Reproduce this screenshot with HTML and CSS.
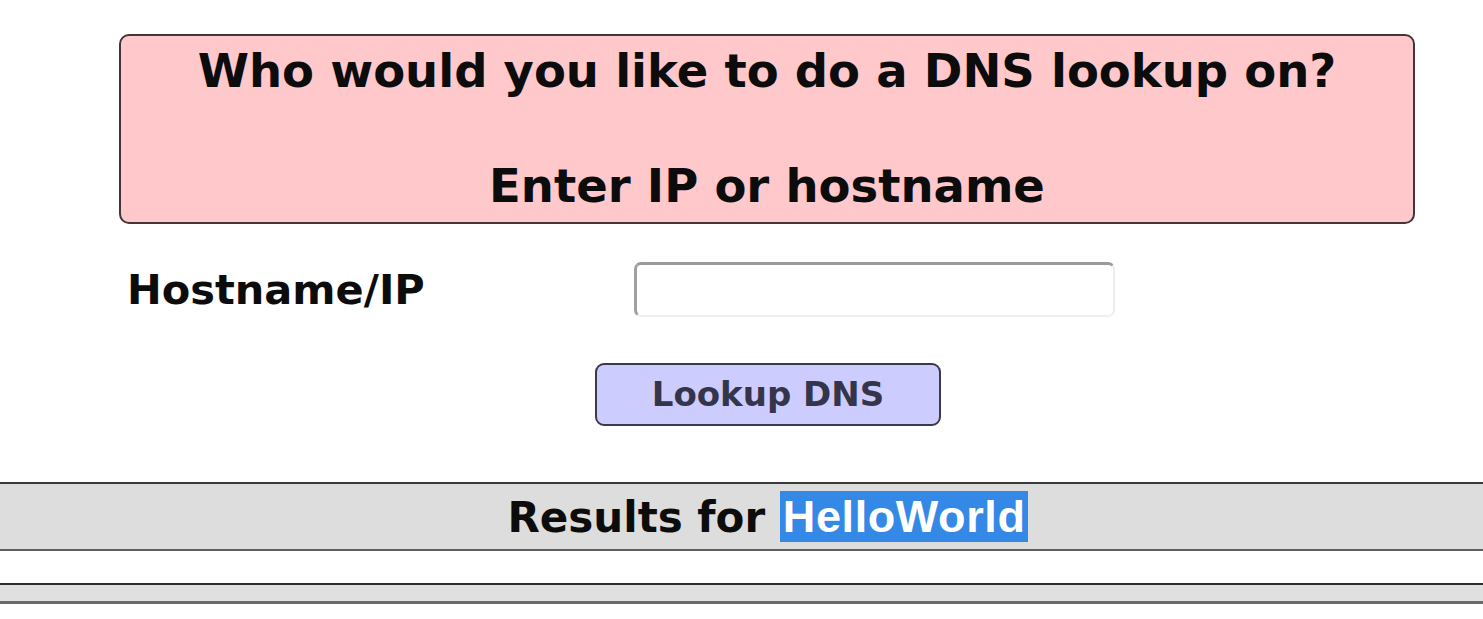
FILE: index.html
```html
<!DOCTYPE html>
<html>
<head>
<meta charset="utf-8">
<title>DNS Lookup</title>
<link rel="stylesheet" href="styles.css">
</head>
<body>
<div class="page">
  <div class="prompt">
    <div class="prompt-line">Who would you like to do a DNS lookup on?</div>
    <div class="prompt-line second">Enter IP or hostname</div>
  </div>
  <form class="lookup-form">
    <div class="field-row">
      <label class="field-label" for="host">Hostname/IP</label>
      <input class="field-input" id="host" type="text">
    </div>
    <div class="button-row">
      <button class="lookup-btn" type="button">Lookup DNS</button>
    </div>
  </form>
</div>
<div class="results-bar">Results for <span class="hl">HelloWorld</span></div>
<div class="results-end"></div>
</body>
</html>
```

FILE: styles.css
```css
html, body {
  margin: 0;
  padding: 0;
  background: #ffffff;
  overflow: hidden;
}
body {
  font-family: "DejaVu Sans", sans-serif;
  font-weight: bold;
  color: #0c0c0c;
}
.page {
  width: 1296px;
  margin-left: 119px;
  padding-top: 34px;
}
.prompt {
  background: #ffc8cb;
  border: 2px solid #443536;
  border-radius: 10px;
  padding: 7px 0 6px;
  text-align: center;
  font-size: 46.5px;
  line-height: 57.5px;
}
.prompt-line.second {
  margin-top: 57.5px;
}
.lookup-form {
  margin: 0;
}
.field-row {
  display: flex;
  align-items: center;
  margin-top: 38px;
  padding-left: 8px;
}
.field-label {
  width: 507px;
  font-size: 41.5px;
}
.field-input {
  box-sizing: border-box;
  width: 481px;
  height: 55px;
  margin: 0;
  background: #ffffff;
  border-style: solid;
  border-width: 3px 2px 2px 3px;
  border-color: #9a9a9a #ececec #f0f0f0 #a0a0a0;
  border-radius: 7px;
  outline: none;
}
.button-row {
  display: flex;
  justify-content: center;
  margin-top: 46px;
}
.lookup-btn {
  box-sizing: border-box;
  width: 346px;
  height: 63px;
  margin: 0 0 0 2px;
  background: #ccccff;
  border: 2px solid #3a3a48;
  border-radius: 9px;
  font-family: "DejaVu Sans", sans-serif;
  font-weight: bold;
  font-size: 34px;
  color: #34344a;
  padding: 0;
}
.results-bar {
  margin-top: 56px;
  background: #dddddd;
  border-top: 2px solid #3a3a3a;
  border-bottom: 2px solid #5e5e5e;
  height: 65px;
  line-height: 65px;
  text-align: center;
  padding-left: 53px;
  font-size: 42px;
  white-space: nowrap;
}
.hl {
  background: #3589e6;
  color: #ffffff;
  font-family: "Liberation Sans", Arial, sans-serif;
  font-size: 45px;
  letter-spacing: 0.6px;
  padding: 0 3px;
}
.results-end {
  margin-top: 32px;
  height: 16px;
  background: #e0e0e0;
  border-top: 2px solid #2e2e2e;
  border-bottom: 3px solid #6a6a6a;
}
```
